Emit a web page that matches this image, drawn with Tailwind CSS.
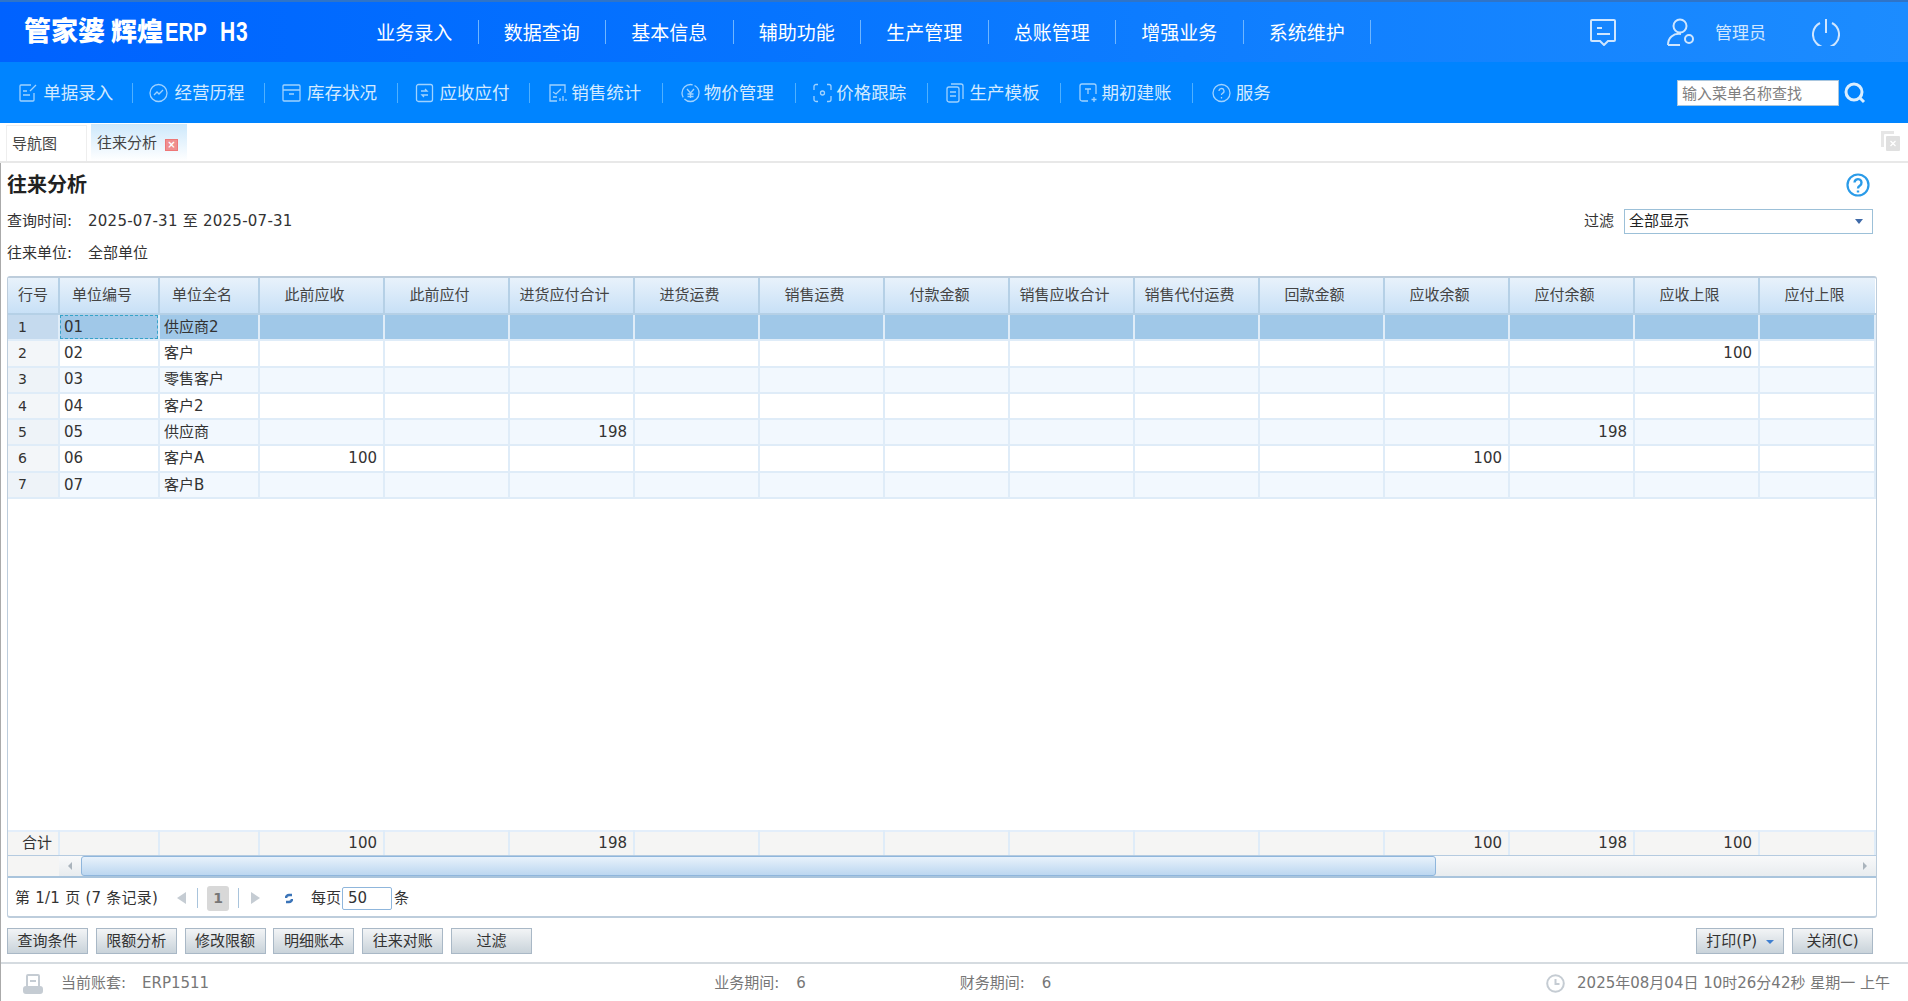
<!DOCTYPE html>
<html lang="zh-CN">
<head>
    <meta charset="UTF-8">
    <meta name="viewport" content="width=device-width, initial-scale=1.0">
    <title>往来分析</title>
    <script src="https://cdn.jsdelivr.net/npm/@tailwindcss/browser@4"></script>
</head>
<body class="bg-white text-[#333] font-['DejaVu_Sans','Noto_Sans_CJK_SC',sans-serif] text-[15px] overflow-hidden">
<div class="w-[1908px] h-[1001px] flex flex-col overflow-hidden">

    <!-- Top menu -->
    <header class="h-[62px] shrink-0 border-t-2 border-[#2f74c8] bg-gradient-to-r from-[#0062ff] to-[#1c8cff] flex items-center text-white font-['Noto_Sans_CJK_SC',sans-serif]">
        <div class="w-[351px] pl-[24px] pb-[2px] flex items-baseline font-black whitespace-nowrap leading-none">
            <span class="text-[27px]">管家婆</span>
            <span class="text-[26px] ml-[6px]">辉煌</span>
            <span class="w-[50px] text-[26px] ml-[2px] font-['Liberation_Sans',sans-serif] font-bold inline-block origin-left scale-x-[0.78]">ERP</span>
            <span class="w-[28px] text-[27px] ml-[5px] font-['Liberation_Sans',sans-serif] font-bold inline-block origin-left scale-x-[0.78] tracking-[1px]">H3</span>
        </div>
        <nav class="flex items-center text-[19px] whitespace-nowrap">
            <a class="w-[127.5px] h-[24px] leading-[24px] border-r border-[#6fb6ff] text-center">业务录入</a>
            <a class="w-[127.5px] h-[24px] leading-[24px] border-r border-[#6fb6ff] text-center">数据查询</a>
            <a class="w-[127.5px] h-[24px] leading-[24px] border-r border-[#6fb6ff] text-center">基本信息</a>
            <a class="w-[127.5px] h-[24px] leading-[24px] border-r border-[#6fb6ff] text-center">辅助功能</a>
            <a class="w-[127.5px] h-[24px] leading-[24px] border-r border-[#6fb6ff] text-center">生产管理</a>
            <a class="w-[127.5px] h-[24px] leading-[24px] border-r border-[#6fb6ff] text-center">总账管理</a>
            <a class="w-[127.5px] h-[24px] leading-[24px] border-r border-[#6fb6ff] text-center">增强业务</a>
            <a class="w-[127.5px] h-[24px] leading-[24px] border-r border-[#6fb6ff] text-center">系统维护</a>
        </nav>
        <div class="ml-auto flex items-center text-[#cfe6ff]">
            <svg class="w-[28px] h-[28px]" viewBox="0 0 28 28" fill="none" stroke="currentColor" stroke-width="2"><path d="M3 2h22a1 1 0 0 1 1 1v19a1 1 0 0 1-1 1h-6l-4 4-4-4H3a1 1 0 0 1-1-1V3a1 1 0 0 1 1-1z"/><path d="M8 10h5M8 16h13"/></svg>
            <svg class="w-[28px] h-[28px] ml-[50px]" viewBox="0 0 28 28" fill="none" stroke="currentColor" stroke-width="2"><circle cx="13" cy="8" r="6.5"/><path d="M1 27c0-7 5-12 13-11M1 27h12"/><circle cx="22" cy="21" r="4"/></svg>
            <span class="ml-[20px] text-[17px]">管理员</span>
            <svg class="w-[28px] h-[28px] ml-[46px] mr-[68px]" viewBox="0 0 28 28" fill="none" stroke="currentColor" stroke-width="2"><path d="M8 5a13 13 0 1 0 12 0"/><path d="M14 1v14"/></svg>
        </div>
    </header>

    <!-- Shortcut bar -->
    <div class="h-[61px] shrink-0 bg-[#0084ff] flex items-center text-[#d3eaff] text-[17.5px] font-['Noto_Sans_CJK_SC',sans-serif] whitespace-nowrap">
        <a class="w-[132.6px] h-[20px] flex items-center justify-center gap-[6px] border-r border-[#4fb0ff]">
            <svg class="w-[19px] h-[20px]" viewBox="0 0 19 20" fill="none" stroke="#9fd2ff" stroke-width="1.3"><path d="M13 2H3a1 1 0 0 0-1 1v14a1 1 0 0 0 1 1h12a1 1 0 0 0 1-1v-7"/><path d="M5 8h4M5 12h7M12 8l6-6"/></svg>单据录入</a>
        <a class="w-[132.6px] h-[20px] flex items-center justify-center gap-[6px] border-r border-[#4fb0ff] pr-[3px]">
            <svg class="w-[19px] h-[20px]" viewBox="0 0 19 20" fill="none" stroke="#9fd2ff" stroke-width="1.3"><circle cx="9.5" cy="10" r="8.5"/><path d="M5 12l3-3 2 2 4-4"/></svg>经营历程</a>
        <a class="w-[132.6px] h-[20px] flex items-center justify-center gap-[6px] border-r border-[#4fb0ff] pr-[3px]">
            <svg class="w-[19px] h-[20px]" viewBox="0 0 19 20" fill="none" stroke="#9fd2ff" stroke-width="1.3"><rect x="1" y="2" width="17" height="16" rx="1"/><path d="M1 7h17M7 11h5"/></svg>库存状况</a>
        <a class="w-[132.6px] h-[20px] flex items-center justify-center gap-[6px] border-r border-[#4fb0ff] pr-[3px]">
            <svg class="w-[19px] h-[20px]" viewBox="0 0 19 20" fill="none" stroke="#9fd2ff" stroke-width="1.3"><rect x="1.5" y="1.5" width="16" height="17" rx="2"/><path d="M6 8h6l-2-2M13 12H7l2 2"/></svg>应收应付</a>
        <a class="w-[132.6px] h-[20px] flex items-center justify-center gap-[4px] border-r border-[#4fb0ff] pr-[3px]">
            <svg class="w-[19px] h-[20px]" viewBox="0 0 19 20" fill="none" stroke="#9fd2ff" stroke-width="1.3"><path d="M9 18H2V2h15v8"/><path d="M5 9l3 2 5-5M5 14h4M12 18v-3M15 18v-5M18 18v-2"/></svg>销售统计</a>
        <a class="w-[132.6px] h-[20px] flex items-center justify-center gap-[4px] border-r border-[#4fb0ff] pr-[3px]">
            <svg class="w-[19px] h-[20px]" viewBox="0 0 19 20" fill="none" stroke="#9fd2ff" stroke-width="1.3"><circle cx="9.5" cy="10" r="8.5" stroke-dasharray="20 2"/><path d="M6 6l3.5 4L13 6M9.5 10v5M6.5 11h6M6.5 13.500h6"/></svg>物价管理</a>
        <a class="w-[132.6px] h-[20px] flex items-center justify-center gap-[4px] border-r border-[#4fb0ff] pr-[3px]">
            <svg class="w-[19px] h-[20px]" viewBox="0 0 19 20" fill="none" stroke="#9fd2ff" stroke-width="1.3"><path d="M5 1.500H3a2 2 0 0 0-2 2V7M14 1.500h2a2 2 0 0 1 2 2V7M5 18.500H3a2 2 0 0 1-2-2V13M14 18.500h2a2 2 0 0 0 2-2V13"/><circle cx="9.500" cy="10" r="2"/></svg>价格跟踪</a>
        <a class="w-[132.6px] h-[20px] flex items-center justify-center gap-[5px] border-r border-[#4fb0ff] pr-[3px]">
            <svg class="w-[19px] h-[20px]" viewBox="0 0 19 20" fill="none" stroke="#9fd2ff" stroke-width="1.3"><rect x="2" y="4" width="12" height="15" rx="2"/><path d="M6 1h10a2 2 0 0 1 2 2v13M5 9h6M5 13h6"/></svg>生产模板</a>
        <a class="w-[132.6px] h-[20px] flex items-center justify-center gap-[4px] border-r border-[#4fb0ff] pr-[3px]">
            <svg class="w-[19px] h-[20px]" viewBox="0 0 19 20" fill="none" stroke="#9fd2ff" stroke-width="1.3"><path d="M9 18H3a2 2 0 0 1-2-2V3a2 2 0 0 1 2-2h12a2 2 0 0 1 2 2v8"/><path d="M6 6h6M9 6v5M15 14v5M12.500 16.500h5"/></svg>期初建账</a>
        <a class="w-[96px] h-[20px] flex items-center justify-center gap-[5px]">
            <svg class="w-[19px] h-[20px]" viewBox="0 0 19 20" fill="none" stroke="#9fd2ff" stroke-width="1.3"><circle cx="9.500" cy="10" r="8.500"/><path d="M7 8a2.500 2.500 0 1 1 3.500 2.300c-.7.400-1 .9-1 1.700M9.500 14v1.500"/></svg>服务</a>
        <div class="ml-auto flex items-center mr-[42px]">
            <input class="w-[162px] h-[26px] bg-white border border-[#a9c6de] px-[4px] text-[15px] text-[#333] placeholder:text-[#808080] outline-none" placeholder="输入菜单名称查找">
            <svg class="w-[22px] h-[22px] ml-[5px]" viewBox="0 0 22 22" fill="none" stroke="#d9eeff" stroke-width="3"><circle cx="10" cy="10" r="8"/><path d="M16 16l4 4"/></svg>
        </div>
    </div>

    <!-- Tabs -->
    <div class="h-[40px] shrink-0 border-b-2 border-[#e8e8e8] flex items-end pl-[6px] gap-[4px] relative">
        <div class="w-[81px] h-[36px] border border-b-0 border-[#eee] pl-[5px] leading-[36px] text-[#444]">导航图</div>
        <div class="w-[96px] h-[37px] bg-gradient-to-b from-[#cde8fb] to-white pl-[6px] pt-[2px] flex items-center text-[#444]">
            <span>往来分析</span>
            <span class="ml-[8px] mt-[2px] w-[13px] h-[12px] bg-[#ef8f8f] border border-[#e77] text-white text-[10px] leading-[10px] text-center font-bold">×</span>
        </div>
        <svg class="absolute right-[8px] top-[7px] w-[20px] h-[21px]" viewBox="0 0 20 21"><path d="M1 1h13v3H5a1 1 0 0 0-1 1v12H1z" fill="#e6e6e6"/><rect x="6" y="6" width="14" height="15" rx="1" fill="#e0e0e0"/><path d="M10.500 11l5 5M15.500 11l-5 5" stroke="#fff" stroke-width="1.300"/></svg>
    </div>

    <!-- Report -->
    <main class="flex-1 min-h-0 flex flex-col border-l border-[#aaa]">
        <div class="h-[113px] shrink-0 pl-[6px] pr-[35px] flex flex-col">
            <div class="flex items-center justify-between pt-[2px] h-[40px]">
                <h1 class="text-[20px] font-bold text-[#222] font-['Noto_Sans_CJK_SC',sans-serif]">往来分析</h1>
                <svg class="w-[24px] h-[24px] mr-[3px] mt-[1px]" viewBox="0 0 24 24" fill="none" stroke="#2a9be8"><circle cx="12" cy="12" r="10.500" stroke-width="2.200"/><path d="M8.500 9.500a3.500 3.500 0 1 1 5.500 3c-1.300.8-2 1.500-2 3M12 17.500v2" stroke-width="2.400"/></svg>
            </div>
            <div class="flex items-center h-[32px] mt-[2px]">
                <span class="w-[81px]">查询时间:</span><span class="tracking-[0.25px]">2025-07-31 至 2025-07-31</span>
                <span class="ml-auto">过滤</span>
                <div class="ml-[10px] w-[249px] h-[25px] border border-[#9cc0d8] flex items-center pl-[4px] pr-[9px] justify-between text-[#222]">
                    <span>全部显示</span>
                    <span class="w-0 h-0 border-x-[4px] border-x-transparent border-t-[5px] border-t-[#3f6aa8]"></span>
                </div>
            </div>
            <div class="flex items-center h-[32px]">
                <span class="w-[81px]">往来单位:</span><span>全部单位</span>
            </div>
        </div>

        <section class="ml-[6px] w-[1870px] h-[642px] shrink-0 border-x border-y-2 border-[#bdcddc] rounded-[3px] flex flex-col">
            <table class="w-full table-fixed border-collapse [&_td]:border-r-2 [&_td]:border-b-2 [&_td]:border-[#dfecf8] [&_td]:px-[4px] [&_td]:py-0 [&_td]:whitespace-nowrap [&_td]:overflow-hidden [&_td.n]:text-right [&_td.n]:pr-[6px]">
                <colgroup>
                    <col class="w-[51px]"><col class="w-[100px]"><col class="w-[100px]"><col class="w-[125px]"><col class="w-[125px]"><col class="w-[125px]"><col class="w-[125px]"><col class="w-[125px]"><col class="w-[125px]"><col class="w-[125px]"><col class="w-[125px]"><col class="w-[125px]"><col class="w-[125px]"><col class="w-[125px]"><col class="w-[125px]"><col>
                </colgroup>
                <thead>
                    <tr class="h-[36px] bg-gradient-to-b from-[#e8f2fb] to-[#c7e0f6] [&_th]:font-normal [&_th]:text-[#444] [&_th]:border-r-2 [&_th]:border-b-2 [&_th]:border-[#b5d0e6] [&_th]:pr-[14px] [&_th]:whitespace-nowrap">
                        <th class="!pr-0">行号</th><th>单位编号</th><th>单位全名</th><th>此前应收</th><th>此前应付</th><th>进货应付合计</th><th>进货运费</th><th>销售运费</th><th>付款金额</th><th>销售应收合计</th><th>销售代付运费</th><th>回款金额</th><th>应收余额</th><th>应付余额</th><th>应收上限</th><th class="!border-r-0 !pr-[6px]">应付上限</th>
                    </tr>
                </thead>
                <tbody class="text-[#333]">
                    <tr class="h-[26.3px] bg-[#a0c8e8]">
                        <td class="!pl-[10px] !bg-[#c5daee] pt-[4px] text-[14px]">1</td><td class="outline-1 -outline-offset-2 outline-dashed outline-[#36a3c9]">01</td><td>供应商2</td><td></td><td></td><td></td><td></td><td></td><td></td><td></td><td></td><td></td><td></td><td></td><td></td><td></td>
                    </tr>
                    <tr class="h-[26.3px] bg-white">
                        <td class="!pl-[10px] !bg-[#f3f6f9] pt-[4px] text-[14px]">2</td><td>02</td><td>客户</td><td></td><td></td><td></td><td></td><td></td><td></td><td></td><td></td><td></td><td></td><td></td><td class="n">100</td><td></td>
                    </tr>
                    <tr class="h-[26.3px] bg-[#f2f8fe]">
                        <td class="!pl-[10px] !bg-[#eef3f8] pt-[4px] text-[14px]">3</td><td>03</td><td>零售客户</td><td></td><td></td><td></td><td></td><td></td><td></td><td></td><td></td><td></td><td></td><td></td><td></td><td></td>
                    </tr>
                    <tr class="h-[26.3px] bg-white">
                        <td class="!pl-[10px] !bg-[#f3f6f9] pt-[4px] text-[14px]">4</td><td>04</td><td>客户2</td><td></td><td></td><td></td><td></td><td></td><td></td><td></td><td></td><td></td><td></td><td></td><td></td><td></td>
                    </tr>
                    <tr class="h-[26.3px] bg-[#f2f8fe]">
                        <td class="!pl-[10px] !bg-[#eef3f8] pt-[4px] text-[14px]">5</td><td>05</td><td>供应商</td><td></td><td></td><td class="n">198</td><td></td><td></td><td></td><td></td><td></td><td></td><td></td><td class="n">198</td><td></td><td></td>
                    </tr>
                    <tr class="h-[26.3px] bg-white">
                        <td class="!pl-[10px] !bg-[#f3f6f9] pt-[4px] text-[14px]">6</td><td>06</td><td>客户A</td><td class="n">100</td><td></td><td></td><td></td><td></td><td></td><td></td><td></td><td></td><td class="n">100</td><td></td><td></td><td></td>
                    </tr>
                    <tr class="h-[26.3px] bg-[#f2f8fe]">
                        <td class="!pl-[10px] !bg-[#eef3f8] pt-[4px] text-[14px]">7</td><td>07</td><td>客户B</td><td></td><td></td><td></td><td></td><td></td><td></td><td></td><td></td><td></td><td></td><td></td><td></td><td></td>
                    </tr>
                </tbody>
            </table>
            <div class="flex-1"></div>

            <!-- Totals -->
            <table class="w-full table-fixed border-collapse border-t-2 border-[#e3eefa] bg-[#f5f5f4] [&_td]:border-r-2 [&_td]:border-[#dfecf8] [&_td]:px-[4px] [&_td.n]:text-right [&_td.n]:pr-[6px]">
                <colgroup>
                    <col class="w-[51px]"><col class="w-[100px]"><col class="w-[100px]"><col class="w-[125px]"><col class="w-[125px]"><col class="w-[125px]"><col class="w-[125px]"><col class="w-[125px]"><col class="w-[125px]"><col class="w-[125px]"><col class="w-[125px]"><col class="w-[125px]"><col class="w-[125px]"><col class="w-[125px]"><col class="w-[125px]"><col>
                </colgroup>
                <tr class="h-[24px]">
                    <td class="n">合计</td><td></td><td></td><td class="n">100</td><td></td><td class="n">198</td><td></td><td></td><td></td><td></td><td></td><td></td><td class="n">100</td><td class="n">198</td><td class="n">100</td><td></td>
                </tr>
            </table>

            <!-- Scrollbar -->
            <div class="h-[23px] shrink-0 flex border-y border-t-[#b5cbe0] border-b-2 border-b-[#a9c4dc] bg-[#f5f5f4]">
                <div class="w-[51px]"></div>
                <div class="flex-1 flex items-stretch bg-gradient-to-b from-[#f8f9fa] to-[#e8ecef]">
                    <div class="w-[22px] flex items-center justify-center"><span class="w-0 h-0 border-y-[4px] border-y-transparent border-r-[4px] border-r-[#aab4bd]"></span></div>
                    <div class="w-[1355px] rounded-[3px] border border-[#8fb6dc] bg-gradient-to-b from-[#e8f2fb] to-[#bcd7f0]"></div>
                    <div class="ml-auto w-[23px] flex items-center justify-center"><span class="w-0 h-0 border-y-[4px] border-y-transparent border-l-[4px] border-l-[#aab4bd]"></span></div>
                </div>
            </div>

            <!-- Pager -->
            <div class="h-[38px] shrink-0 flex items-center pl-[7px] pt-[2px] text-[#333] whitespace-nowrap">
                <span class="w-[162px] tracking-[0.25px]">第 1/1 页 (7 条记录)</span>
                <span class="w-0 h-0 border-y-[6px] border-y-transparent border-r-[9px] border-r-[#c5ccd3]"></span>
                <span class="ml-[11px] w-px h-[20px] bg-[#a9c4dc]"></span>
                <span class="ml-[9px] w-[22px] h-[25px] rounded-[3px] bg-[#d8d8d8] text-center leading-[25px] font-bold text-[#777] text-[14px]">1</span>
                <span class="ml-[9px] w-px h-[20px] bg-[#a9c4dc]"></span>
                <span class="ml-[12px] w-0 h-0 border-y-[6px] border-y-transparent border-l-[9px] border-l-[#c5ccd3]"></span>
                <svg class="ml-[25px] w-[8px] h-[11px]" viewBox="0 0 8 11" fill="none" stroke="#3b74b8" stroke-width="2.500"><path d="M1 5a3 3 0 0 1 3-3h3M7 6a3 3 0 0 1-3 3H1"/></svg>
                <span class="ml-[18px]">每页</span>
                <span class="ml-[1px] w-[50px] h-[23px] border border-[#8fb6dc] rounded-[2px] pl-[5px] leading-[21px]">50</span>
                <span class="ml-[2px]">条</span>
            </div>
        </section>

        <!-- Actions -->
        <div class="h-[44px] shrink-0 flex items-start pt-[10px] pl-[6px] pr-[35px] gap-[7.8px] text-[#333] [&_button]:h-[26px] [&_button]:w-[81px] [&_button]:border [&_button]:border-[#a9b8c6] [&_button]:bg-gradient-to-b [&_button]:from-[#f2f4f6] [&_button]:to-[#c9d3da] [&_button]:pt-[1px]">
            <button>查询条件</button>
            <button>限额分析</button>
            <button>修改限额</button>
            <button>明细账本</button>
            <button>往来对账</button>
            <button>过滤</button>
            <button class="ml-auto !w-[88px] flex items-center justify-center gap-[9px]">打印(P)<span class="w-0 h-0 border-x-[4px] border-x-transparent border-t-[4px] border-t-[#3f7fd0]"></span></button>
            <button>关闭(C)</button>
        </div>

        <!-- Status bar -->
        <footer class="flex-1 border-t-2 border-[#d5dbe0] flex items-center pt-[2px] text-[#777] whitespace-nowrap">
            <svg class="ml-[22px] w-[20px] h-[20px]" viewBox="0 0 20 20" fill="none" stroke="#c5ccd3" stroke-width="2"><rect x="4" y="1" width="12" height="12" rx="1"/><path d="M7 7h6"/><rect x="1" y="13" width="18" height="6" rx="2" fill="#c5ccd3"/></svg>
            <span class="ml-[18px] w-[81px]">当前账套:</span><span>ERP1511</span>
            <span class="ml-[505px] w-[82px]">业务期间:</span><span>6</span>
            <span class="ml-[154px] w-[82px]">财务期间:</span><span>6</span>
            <svg class="ml-auto w-[19px] h-[19px]" viewBox="0 0 19 19" fill="none" stroke="#c5ccd3" stroke-width="2"><circle cx="9.500" cy="9.500" r="8.300"/><path d="M9.500 5v5h4"/></svg>
            <span class="ml-[12px] mr-[18px]">2025年08月04日 10时26分42秒 星期一 上午</span>
        </footer>
    </main>
</div>
</body>
</html>
